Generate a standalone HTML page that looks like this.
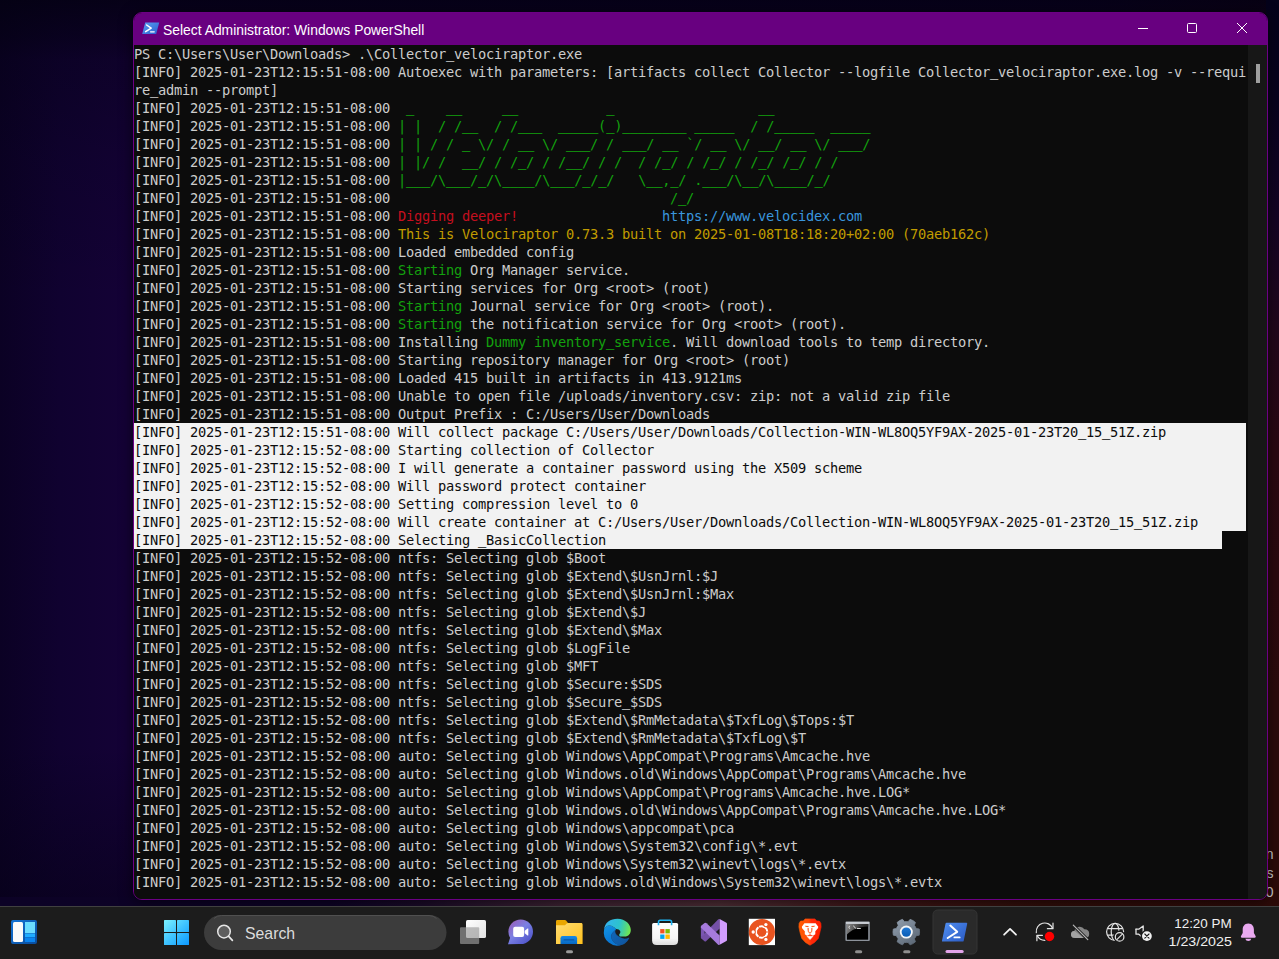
<!DOCTYPE html>
<html lang="en">
<head>
<meta charset="utf-8">
<title>Select Administrator: Windows PowerShell</title>
<style>
html,body{margin:0;padding:0;}
body{width:1279px;height:959px;overflow:hidden;position:relative;background:#0c0230;font-family:"Liberation Sans",sans-serif;}
#wall{position:absolute;left:0;top:0;width:1279px;height:906px;
 background:
  linear-gradient(to bottom, rgba(3,1,16,.8) 0px, rgba(3,1,16,.55) 36px, rgba(3,1,16,.3) 60px, rgba(3,1,16,.12) 160px, rgba(3,1,16,0) 300px),
  linear-gradient(to top, rgba(6,1,22,.55) 0px, rgba(6,1,22,0) 160px),
  linear-gradient(to right, #0b0124 0px, #100230 60px, #140236 125px, #140236 1100px, #1a0420 1279px);
}
#wallr{position:absolute;left:1266px;top:0;width:13px;height:906px;
 background:linear-gradient(to bottom,#04021a 0px,#08021e 100px,#140424 220px,#22071c 330px,#2a0812 450px,#2c0a0c 700px,#2c0a08 906px);}
#wallb{position:absolute;left:0;top:897px;width:1279px;height:9px;
 background:linear-gradient(to right,#0c0226 0px,#0d0226 330px,#1a0a28 420px,#3c2232 560px,#4c2c34 720px,#3e1618 860px,#300d09 1040px,#2c0a08 1279px);}
#wm{position:absolute;right:5.5px;top:844.6px;font-size:14px;line-height:19px;color:#cfcfcf;text-align:right;}
#win{position:absolute;left:133px;top:12px;width:1133px;height:886px;border:1px solid #6c0084;box-shadow:0 2px 14px rgba(0,0,0,.55);border-radius:9px;overflow:hidden;background:#0c0c0c;}
#tb{position:absolute;left:0;top:0;width:1133px;height:32px;background:#680080;}
#ttl{position:absolute;left:29.4px;top:1px;line-height:32px;font-size:15px;color:#fff;white-space:nowrap;transform-origin:0 50%;transform:scaleX(.9245);}
#term{position:absolute;left:0;top:32px;width:1114px;height:854px;background:#0c0c0c;overflow:hidden;}
#sb{position:absolute;left:1114px;top:32px;width:19px;height:854px;background:#171717;}
#th{position:absolute;left:8px;top:19px;width:4px;height:19px;background:#9f9f9f;}
.l{height:18px;line-height:18px;white-space:pre;color:#cccccc;font-family:"DejaVu Sans Mono","Liberation Mono",monospace;font-size:13.7px;letter-spacing:-0.2405px;width:1112px;}
.s{color:#0c0c0c;}
.sel{position:absolute;left:0;background:#f2f2f2;}
.u{position:relative;top:-1.5px;text-shadow:0 0 0 currentColor}
.g{color:#13a10e}.r{color:#c50f1f}.y{color:#c19c00}.b{color:#3a96dd}
#bar{position:absolute;left:0;top:906px;width:1279px;height:53px;background:#1c1c1c;}
#srch{left:244.5px;top:16px;line-height:24px;font-size:17px;color:#dcdcdc;transform-origin:0 50%;transform:scaleX(.93);white-space:nowrap;}
#clk1,#clk2{right:47.5px;font-size:13px;line-height:16px;color:#f0f0f0;white-space:nowrap;transform-origin:100% 50%;}
#clk1{top:10px;transform:scaleX(1.032);}
#clk2{top:28px;transform:scaleX(1.095);}
.ab{position:absolute;}
</style>
</head>
<body>
<div id="wall"></div>
<div id="wallr"></div>
<div id="wallb"></div>
<div id="wm"><div>n</div><div>s</div><div>0</div></div>
<div id="win">
 <div id="tb">
  <svg class="ab" style="left:8px;top:9px" width="18" height="13" viewBox="0 0 18 14" preserveAspectRatio="none">
   <defs><linearGradient id="psg" x1="0" y1="0" x2="1" y2="1"><stop offset="0" stop-color="#5aa0f0"/><stop offset="1" stop-color="#2a5fd0"/></linearGradient></defs>
   <path d="M3.2 0.5H17.2L14.2 13H0.2Z" fill="url(#psg)"/>
   <path d="M4.6 3.2L9.2 6.6L3.6 10.4" fill="none" stroke="#fff" stroke-width="1.5" stroke-linecap="round" stroke-linejoin="round"/>
   <path d="M8.6 10.6H12.2" fill="none" stroke="#fff" stroke-width="1.4" stroke-linecap="round"/>
  </svg>
  <div id="ttl">Select Administrator: Windows PowerShell</div>
  <svg class="ab" style="left:1000px;top:6px" width="120" height="20" viewBox="0 0 120 20" fill="none" stroke="#fff" stroke-width="1">
   <path d="M4 9.5H14"/>
   <rect x="53.5" y="4.5" width="9" height="9" rx="1"/>
   <path d="M103 4L113 14M113 4L103 14"/>
  </svg>
 </div>
 <div id="term">
<div class="sel" style="top:378px;width:1112px;height:108px"></div><div class="sel" style="top:486px;width:1088px;height:18px"></div>
<div style="position:relative">
<div class="l">PS C:\Users\User\Downloads&gt; .\Collector<span class="u">_</span>velociraptor.exe</div>
<div class="l">[INFO] 2025-01-23T12:15:51-08:00 Autoexec with parameters: [artifacts collect Collector --logfile Collector<span class="u">_</span>velociraptor.exe.log -v --requi</div>
<div class="l">re<span class="u">_</span>admin --prompt]</div>
<div class="l">[INFO] 2025-01-23T12:15:51-08:00 <span class="g"> <span class="u">_</span>    <span class="u">__</span>     <span class="u">__</span>           <span class="u">_</span>                  <span class="u">__</span></span></div>
<div class="l">[INFO] 2025-01-23T12:15:51-08:00 <span class="g">| |  / /<span class="u">__</span>  / /<span class="u">___</span>  <span class="u">_____</span>(<span class="u">_</span>)<span class="u">________</span> <span class="u">_____</span>  / /<span class="u">_____</span>  <span class="u">_____</span></span></div>
<div class="l">[INFO] 2025-01-23T12:15:51-08:00 <span class="g">| | / / <span class="u">_</span> \/ / <span class="u">__</span> \/ <span class="u">___</span>/ / <span class="u">___</span>/ <span class="u">__</span> `/ <span class="u">__</span> \/ <span class="u">__</span>/ <span class="u">__</span> \/ <span class="u">___</span>/</span></div>
<div class="l">[INFO] 2025-01-23T12:15:51-08:00 <span class="g">| |/ /  <span class="u">__</span>/ / /<span class="u">_</span>/ / /<span class="u">__</span>/ / /  / /<span class="u">_</span>/ / /<span class="u">_</span>/ / /<span class="u">_</span>/ /<span class="u">_</span>/ / /</span></div>
<div class="l">[INFO] 2025-01-23T12:15:51-08:00 <span class="g">|<span class="u">___</span>/\<span class="u">___</span>/<span class="u">_</span>/\<span class="u">____</span>/\<span class="u">___</span>/<span class="u">_</span>/<span class="u">_</span>/   \<span class="u">__</span>,<span class="u">_</span>/ .<span class="u">___</span>/\<span class="u">__</span>/\<span class="u">____</span>/<span class="u">_</span>/</span></div>
<div class="l">[INFO] 2025-01-23T12:15:51-08:00 <span class="g">                                  /<span class="u">_</span>/</span></div>
<div class="l">[INFO] 2025-01-23T12:15:51-08:00 <span class="r">Digging deeper!</span>                  <span class="b">https://www.velocidex.com</span></div>
<div class="l">[INFO] 2025-01-23T12:15:51-08:00 <span class="y">This is Velociraptor 0.73.3 built on 2025-01-08T18:18:20+02:00 (70aeb162c)</span></div>
<div class="l">[INFO] 2025-01-23T12:15:51-08:00 Loaded embedded config</div>
<div class="l">[INFO] 2025-01-23T12:15:51-08:00 <span class="g">Starting</span> Org Manager service.</div>
<div class="l">[INFO] 2025-01-23T12:15:51-08:00 Starting services for Org &lt;root&gt; (root)</div>
<div class="l">[INFO] 2025-01-23T12:15:51-08:00 <span class="g">Starting</span> Journal service for Org &lt;root&gt; (root).</div>
<div class="l">[INFO] 2025-01-23T12:15:51-08:00 <span class="g">Starting</span> the notification service for Org &lt;root&gt; (root).</div>
<div class="l">[INFO] 2025-01-23T12:15:51-08:00 Installing <span class="g">Dummy inventory<span class="u">_</span>service</span>. Will download tools to temp directory.</div>
<div class="l">[INFO] 2025-01-23T12:15:51-08:00 Starting repository manager for Org &lt;root&gt; (root)</div>
<div class="l">[INFO] 2025-01-23T12:15:51-08:00 Loaded 415 built in artifacts in 413.9121ms</div>
<div class="l">[INFO] 2025-01-23T12:15:51-08:00 Unable to open file /uploads/inventory.csv: zip: not a valid zip file</div>
<div class="l">[INFO] 2025-01-23T12:15:51-08:00 Output Prefix : C:/Users/User/Downloads</div>
<div class="l s">[INFO] 2025-01-23T12:15:51-08:00 Will collect package C:/Users/User/Downloads/Collection-WIN-WL8OQ5YF9AX-2025-01-23T20<span class="u">_</span>15<span class="u">_</span>51Z.zip</div>
<div class="l s">[INFO] 2025-01-23T12:15:52-08:00 Starting collection of Collector</div>
<div class="l s">[INFO] 2025-01-23T12:15:52-08:00 I will generate a container password using the X509 scheme</div>
<div class="l s">[INFO] 2025-01-23T12:15:52-08:00 Will password protect container</div>
<div class="l s">[INFO] 2025-01-23T12:15:52-08:00 Setting compression level to 0</div>
<div class="l s">[INFO] 2025-01-23T12:15:52-08:00 Will create container at C:/Users/User/Downloads/Collection-WIN-WL8OQ5YF9AX-2025-01-23T20<span class="u">_</span>15<span class="u">_</span>51Z.zip</div>
<div class="l s">[INFO] 2025-01-23T12:15:52-08:00 Selecting <span class="u">_</span>BasicCollection</div>
<div class="l">[INFO] 2025-01-23T12:15:52-08:00 ntfs: Selecting glob $Boot</div>
<div class="l">[INFO] 2025-01-23T12:15:52-08:00 ntfs: Selecting glob $Extend\$UsnJrnl:$J</div>
<div class="l">[INFO] 2025-01-23T12:15:52-08:00 ntfs: Selecting glob $Extend\$UsnJrnl:$Max</div>
<div class="l">[INFO] 2025-01-23T12:15:52-08:00 ntfs: Selecting glob $Extend\$J</div>
<div class="l">[INFO] 2025-01-23T12:15:52-08:00 ntfs: Selecting glob $Extend\$Max</div>
<div class="l">[INFO] 2025-01-23T12:15:52-08:00 ntfs: Selecting glob $LogFile</div>
<div class="l">[INFO] 2025-01-23T12:15:52-08:00 ntfs: Selecting glob $MFT</div>
<div class="l">[INFO] 2025-01-23T12:15:52-08:00 ntfs: Selecting glob $Secure:$SDS</div>
<div class="l">[INFO] 2025-01-23T12:15:52-08:00 ntfs: Selecting glob $Secure<span class="u">_</span>$SDS</div>
<div class="l">[INFO] 2025-01-23T12:15:52-08:00 ntfs: Selecting glob $Extend\$RmMetadata\$TxfLog\$Tops:$T</div>
<div class="l">[INFO] 2025-01-23T12:15:52-08:00 ntfs: Selecting glob $Extend\$RmMetadata\$TxfLog\$T</div>
<div class="l">[INFO] 2025-01-23T12:15:52-08:00 auto: Selecting glob Windows\AppCompat\Programs\Amcache.hve</div>
<div class="l">[INFO] 2025-01-23T12:15:52-08:00 auto: Selecting glob Windows.old\Windows\AppCompat\Programs\Amcache.hve</div>
<div class="l">[INFO] 2025-01-23T12:15:52-08:00 auto: Selecting glob Windows\AppCompat\Programs\Amcache.hve.LOG*</div>
<div class="l">[INFO] 2025-01-23T12:15:52-08:00 auto: Selecting glob Windows.old\Windows\AppCompat\Programs\Amcache.hve.LOG*</div>
<div class="l">[INFO] 2025-01-23T12:15:52-08:00 auto: Selecting glob Windows\appcompat\pca</div>
<div class="l">[INFO] 2025-01-23T12:15:52-08:00 auto: Selecting glob Windows\System32\config\*.evt</div>
<div class="l">[INFO] 2025-01-23T12:15:52-08:00 auto: Selecting glob Windows\System32\winevt\logs\*.evtx</div>
<div class="l">[INFO] 2025-01-23T12:15:52-08:00 auto: Selecting glob Windows.old\Windows\System32\winevt\logs\*.evtx</div>
</div>
 </div>
 <div id="sb"><div id="th"></div></div>
</div>
<div id="bar">
<svg class="ab" style="left:0;top:0" width="1279" height="53" viewBox="0 906 1279 53">
 <defs>
  <linearGradient id="wg" x1="0" y1="0" x2="1" y2="1"><stop offset="0" stop-color="#1273d6"/><stop offset="1" stop-color="#0a4c9c"/></linearGradient>
  <linearGradient id="stg" gradientUnits="userSpaceOnUse" x1="164" y1="920" x2="189" y2="945"><stop offset="0" stop-color="#7cf2ff"/><stop offset=".5" stop-color="#3fc3ff"/><stop offset="1" stop-color="#0c98ff"/></linearGradient>
  <linearGradient id="tvw" x1="0" y1="0" x2="1" y2="1"><stop offset="0" stop-color="#ffffff"/><stop offset="1" stop-color="#e2e2e2"/></linearGradient>
  <linearGradient id="tcg" gradientUnits="userSpaceOnUse" x1="510" y1="921" x2="530" y2="944"><stop offset="0" stop-color="#9a5fb8"/><stop offset=".45" stop-color="#7a80e4"/><stop offset="1" stop-color="#4a4fc6"/></linearGradient>
  <linearGradient id="fg" x1="0" y1="0" x2="1" y2="1"><stop offset="0" stop-color="#ffdc72"/><stop offset="1" stop-color="#ffc21f"/></linearGradient>
  <linearGradient id="fb" x1="0" y1="0" x2="0" y2="1"><stop offset="0" stop-color="#1489e6"/><stop offset="1" stop-color="#0768c2"/></linearGradient>
  <linearGradient id="eg1" gradientUnits="userSpaceOnUse" x1="605" y1="924" x2="630" y2="930"><stop offset="0" stop-color="#33b4f0"/><stop offset=".55" stop-color="#2dc3cc"/><stop offset=".8" stop-color="#4fd48a"/><stop offset="1" stop-color="#70e650"/></linearGradient>
  <linearGradient id="eg2" gradientUnits="userSpaceOnUse" x1="606" y1="925" x2="618" y2="946"><stop offset="0" stop-color="#1394e4"/><stop offset=".6" stop-color="#0a7ad6"/><stop offset="1" stop-color="#0b72cc"/></linearGradient>
  <linearGradient id="eg3" gradientUnits="userSpaceOnUse" x1="612" y1="931" x2="626" y2="945"><stop offset="0" stop-color="#1166b8"/><stop offset="1" stop-color="#0f559e"/></linearGradient>
  <linearGradient id="sg" x1="0" y1="0" x2="0" y2="1"><stop offset="0" stop-color="#ffffff"/><stop offset=".7" stop-color="#f6f6f6"/><stop offset="1" stop-color="#dcdcdc"/></linearGradient>
  <linearGradient id="bvg" gradientUnits="userSpaceOnUse" x1="799" y1="932" x2="821" y2="932"><stop offset="0" stop-color="#ff5a00"/><stop offset=".45" stop-color="#ff4a08"/><stop offset=".55" stop-color="#ff2a0a"/><stop offset="1" stop-color="#ff1e00"/></linearGradient>
  <linearGradient id="cmg" gradientUnits="userSpaceOnUse" x1="847" y1="924" x2="868" y2="934"><stop offset="0" stop-color="#8c8c8c"/><stop offset=".55" stop-color="#3a3a3a"/><stop offset="1" stop-color="#1e1e1e"/></linearGradient>
  <linearGradient id="grg" gradientUnits="userSpaceOnUse" x1="896" y1="920" x2="916" y2="945"><stop offset="0" stop-color="#8f9cab"/><stop offset="1" stop-color="#5a6674"/></linearGradient>
  <linearGradient id="gbg" x1="0" y1="0" x2="0" y2="1"><stop offset="0" stop-color="#1f78d6"/><stop offset="1" stop-color="#0a5cb4"/></linearGradient>
  <linearGradient id="psg2" gradientUnits="userSpaceOnUse" x1="945" y1="922" x2="964" y2="942"><stop offset="0" stop-color="#4f8ef2"/><stop offset="1" stop-color="#2c5cc4"/></linearGradient>
 </defs>
 <!-- taskbar base -->
 <rect x="0" y="906" width="1279" height="53" fill="#1c1c1c"/>
 <rect x="0" y="906" width="1279" height="1" fill="#404040"/>
 <!-- widgets -->
 <rect x="11" y="920" width="26" height="24" rx="2" fill="url(#wg)"/>
 <rect x="13" y="922" width="10" height="20" rx="1.5" fill="#fafafa"/>
 <rect x="25" y="922" width="10" height="11.2" fill="#6bdcff"/>
 <rect x="25" y="933.6" width="10" height="3.6" fill="#1fabff"/>
 <rect x="25" y="937.6" width="10" height="4.4" fill="#0a84ee"/>
 <!-- start -->
 <g fill="url(#stg)">
  <rect x="164" y="920" width="12" height="12" rx=".6"/><rect x="177" y="920" width="12" height="12" rx=".6"/>
  <rect x="164" y="933" width="12" height="12" rx=".6"/><rect x="177" y="933" width="12" height="12" rx=".6"/>
 </g>
 <!-- search pill -->
 <rect x="204" y="915" width="242.5" height="35" rx="17.5" fill="#3c3c3c"/>
 <path d="M214 918.5 Q217 915.5 221.500 915.5 H429 Q433.500 915.5 436.500 918.500" fill="none" stroke="#505050" stroke-width="1"/>
 <circle cx="224" cy="931.6" r="6.3" fill="#5e5e5e" stroke="#e6e6e6" stroke-width="1.5"/>
 <path d="M228.700 936.300 L232.400 940.300" stroke="#e6e6e6" stroke-width="1.7" stroke-linecap="round"/>
 <!-- task view -->
 <rect x="466" y="920" width="20" height="18" rx="1.6" fill="url(#tvw)"/>
 <rect x="460" y="927.200" width="19.200" height="16.700" rx="1" fill="#9c9c9c" fill-opacity=".66"/>
 <!-- teams chat -->
 <circle cx="520.700" cy="931.800" r="12.300" fill="url(#tcg)"/>
 <path d="M508 944.300 L510.600 936.300 L519 943.900 Z" fill="url(#tcg)"/>
 <rect x="513.200" y="926.800" width="10.900" height="10.100" rx="1.900" fill="#ffffff"/>
 <path d="M524.700 930.700 L527.600 928.400 Q528.300 928 528.300 928.900 V935 Q528.300 935.900 527.600 935.500 L524.700 933.200 Z" fill="#ffffff"/>
 <!-- file explorer -->
 <path d="M556 921.400 Q556 920 557.400 920 H564.800 Q565.600 920 566.100 920.600 L568 923 H581 Q582.400 923 582.400 924.400 V944.100 H556 Z" fill="#e9a600"/>
 <path d="M556 925.200 H564.300 Q565 925.200 565.500 924.700 L566.700 923.500 Q567.200 923 567.900 923 H581 Q582.400 923 582.400 924.400 V944.100 H556 Z" fill="url(#fg)"/>
 <path d="M560.500 944.100 V938.300 Q560.500 936.100 562.700 936.100 H574.900 Q577.100 936.100 577.100 938.300 V944.100 Z" fill="url(#fb)"/>
 <rect x="563.500" y="939.300" width="10.800" height="1.300" rx=".65" fill="#0a57a8"/>
 <rect x="566" y="950.200" width="7" height="3" rx="1.500" fill="#9a9a9a"/>
 <!-- edge -->
 <path d="M604.1 929.5 C605.4 926.3 607.3 925.3 609.3 925.4 C612 925.6 614.5 927 616.3 929 L615 930.5 C612.3 932.6 610.9 935.2 611.3 937 C611.8 940 613.5 942.5 615.8 943.7 C618 944.6 620.5 944.9 622.5 944.4 A13.3 13.3 0 0 1 604.1 929.5 Z" fill="url(#eg2)"/>
 <path d="M615.2 930.3 C612.3 932.6 610.9 935.2 611.3 937 C611.8 940 613.5 942.5 615.8 943.7 C618 944.6 620.5 944.9 622.5 944.4 C625.3 943.6 627.6 941 628.9 938 C627.5 938.8 626 939 624.4 938.9 C622.8 938.7 621.5 938.3 620.3 937.6 C618.6 936.7 617.4 935.8 616.5 935 C615.3 933.8 614.6 932.2 615.2 930.3 Z" fill="url(#eg3)" stroke="#1163b4" stroke-width=".5"/>
 <path d="M604.1 929.6 C604.5 922.5 610.5 918.7 617.5 918.7 C625.5 918.7 630.8 924.5 630.8 930 C630.8 933.5 628.6 936.6 624.5 936.6 L621 936.6 C619.6 936.4 618.9 935.4 619.2 934.4 C620.2 933 620.6 932.2 620.3 931.4 C619.6 929.8 618 929 616.3 929 C614.5 927 612 925.6 609.3 925.4 C607.3 925.3 605.4 926.3 604.1 929.6 Z" fill="url(#eg1)"/>
 <!-- store -->
 <path d="M652.100 924.400 Q652.100 922.900 653.600 922.900 H676.600 Q678.100 922.900 678.100 924.400 V940.400 Q678.100 944.900 673.600 944.900 H656.600 Q652.100 944.900 652.100 940.400 Z" fill="url(#sg)"/>
 <path d="M658.500 925.200 V922 Q658.500 920.300 660.200 920.300 H669.900 Q671.600 920.300 671.600 922 V925.200" fill="none" stroke="#1fb3f2" stroke-width="1.600"/>
 <rect x="660.200" y="929.100" width="4.300" height="4.300" fill="#f25022"/>
 <rect x="665.400" y="929.100" width="4.400" height="4.300" fill="#7fba00"/>
 <rect x="660.200" y="934.500" width="4.300" height="4.400" fill="#00a4ef"/>
 <rect x="665.400" y="934.500" width="4.400" height="4.400" fill="#ffb900"/>
 <!-- visual studio -->
 <path d="M719.650 919.050 L719.650 928.600 L706 941.300 Q705.300 941.700 704.500 941.200 L701.300 938.600 Q700.800 938 700.900 937.300 L718.300 919.300 Z" fill="#7450a6"/>
 <path d="M700.900 926.800 L704.600 929.800 V934.600 L700.900 937.600 Z" fill="#7a56b2"/>
 <path d="M700.900 926.600 Q700.900 926 701.400 925.500 L704.600 923.100 Q705.600 922.500 706.500 923.200 L719.650 935.600 V944.800 L718.400 945.100 L700.900 927.600 Z" fill="#a67bdc"/>
 <path d="M719.650 919.050 L726.400 922.700 Q727 923.100 727 923.800 V940 Q727 940.700 726.400 941.100 L719.650 944.800 Z" fill="#d29dff"/>
 <!-- ubuntu -->
 <rect x="748.800" y="918.800" width="26.200" height="26.300" fill="#ffffff"/>
 <circle cx="761.900" cy="932" r="13.100" fill="#e95420"/>
 <circle cx="761.700" cy="932" r="5.600" fill="none" stroke="#ffffff" stroke-width="2.100"/>
 <g fill="#e95420"><circle cx="765.900" cy="924.500" r="2.700"/><circle cx="753.100" cy="932" r="2.700"/><circle cx="765.900" cy="939.500" r="2.700"/></g>
 <g stroke="#e95420" stroke-width=".9"><path d="M761.700 932 L757.200 924.200"/><path d="M761.700 932 L770.700 932"/><path d="M761.700 932 L757.200 939.800"/></g>
 <circle cx="761.700" cy="932" r="4.500" fill="#e95420"/>
 <g fill="#ffffff"><circle cx="765.900" cy="924.600" r="1.650"/><circle cx="753.200" cy="932" r="1.650"/><circle cx="765.900" cy="939.400" r="1.650"/></g>
 <!-- brave -->
 <path d="M805.100 918.900 H814.900 L816.800 920.900 L819.400 921 L820.900 923.400 L821.100 927.100 L819.800 932.800 L818.300 938.400 L814.500 942.500 L810 945.200 L805.500 942.500 L801.800 938.400 L800.100 932.800 L798.900 927.100 L799.100 923.400 L800.600 921 L803.300 920.900 Z" fill="url(#bvg)" stroke="url(#bvg)" stroke-width=".6" stroke-linejoin="round"/>
 <path d="M804.400 923.300 H815.600 L818.300 926.800 L817.900 928.300 L815.300 931.300 V934.300 L813 935.800 L810 934.300 L807 935.800 L804.800 934.300 V931.300 L802.100 928.300 L801.800 926.800 Z" fill="#ffffff"/>
 <path d="M807 936.300 H813 L810 939.600 Z" fill="#ffffff" stroke="#ffffff" stroke-width=".6" stroke-linejoin="round"/>
 <g fill="#ff5a1e"><path d="M804.900 925.700 L808.700 926.100 L808.300 927.200 L805.600 926.700 Z"/><path d="M815.100 925.700 L811.300 926.100 L811.700 927.200 L814.400 926.700 Z"/>
 <path d="M807.300 928.300 L808.900 928 L808.900 931.600 L810 932.200 L811.100 931.600 L811.100 928 L812.700 928.300 L812.200 931.800 L810 934 L807.800 931.800 Z" fill-opacity=".8"/></g>
 <!-- cmd -->
 <rect x="845.400" y="921.400" width="24.400" height="19.700" rx="1" fill="#8d939b"/>
 <rect x="846" y="921.900" width="23.200" height="2" fill="#c9ced4"/>
 <rect x="846.900" y="924" width="21.300" height="15.700" fill="#000000"/>
 <path d="M846.900 924 H868.200 V926.500 C858 927 851 930 846.900 934.500 Z" fill="url(#cmg)"/>
 <path d="M849.600 925.800 Q848.200 927.300 849.700 928.700" fill="none" stroke="#f0f0f0" stroke-width=".9"/>
 <path d="M853.300 925.900 L855.800 928.300" stroke="#f0f0f0" stroke-width="1"/>
 <path d="M856.800 928.500 H860.800" stroke="#f0f0f0" stroke-width=".9"/>
 <rect x="855" y="950.200" width="7.200" height="3" rx="1.500" fill="#8e8e8e"/>
 <!-- settings -->
 <path d="M916.17 928.51 L919.23 929.00 A13.3 13.3 0 0 1 919.23 935.20 L916.17 935.69 A10.5 10.5 0 0 1 914.34 938.85 L915.46 941.75 A13.3 13.3 0 0 1 910.08 944.85 L908.12 942.44 A10.5 10.5 0 0 1 904.48 942.44 L902.52 944.85 A13.3 13.3 0 0 1 897.14 941.75 L898.26 938.85 A10.5 10.5 0 0 1 896.43 935.69 L893.37 935.20 A13.3 13.3 0 0 1 893.37 929.00 L896.43 928.51 A10.5 10.5 0 0 1 898.26 925.35 L897.14 922.45 A13.3 13.3 0 0 1 902.52 919.35 L904.48 921.76 A10.5 10.5 0 0 1 908.12 921.76 L910.08 919.35 A13.3 13.3 0 0 1 915.46 922.45 L914.34 925.35 A10.5 10.5 0 0 1 916.17 928.51 Z" fill="url(#grg)" stroke="url(#grg)" stroke-width=".8" stroke-linejoin="round"/>
 <circle cx="906.300" cy="932.100" r="6.500" fill="#f4f6f8"/>
 <circle cx="906.300" cy="932.100" r="4.700" fill="url(#gbg)"/>
 <rect x="903.200" y="950.200" width="7.200" height="3" rx="1.500" fill="#8e8e8e"/>
 <!-- powershell active -->
 <rect x="933" y="910" width="44" height="44" rx="4.500" fill="#2a2a2a" stroke="#343434" stroke-width="1"/>
 <path d="M946.600 922.800 H966.500 Q967.400 922.800 967.200 923.700 L963.700 940.700 Q963.500 941.600 962.600 941.600 H942.700 Q941.800 941.600 942 940.700 L945.500 923.700 Q945.700 922.800 946.600 922.800 Z" fill="url(#psg2)"/>
 <path d="M950.300 925.600 L957.200 931.800 L947.700 938" fill="none" stroke="#ffffff" stroke-width="2" stroke-linecap="round" stroke-linejoin="round"/>
 <path d="M954.400 937.400 H959.600" stroke="#ffffff" stroke-width="1.900" stroke-linecap="round"/>
 <rect x="945.500" y="950" width="18.200" height="3" rx="1.500" fill="#e3a4ea"/>
 <!-- tray chevron -->
 <path d="M1004.100 934.700 L1010.050 928.900 L1016 934.700" fill="none" stroke="#f2f2f2" stroke-width="1.800" stroke-linecap="round" stroke-linejoin="round"/>
 <!-- sync -->
 <g fill="none" stroke="#e4e4e4" stroke-width="1.200" stroke-linecap="round" stroke-linejoin="round">
  <path d="M1036.300 932.600 A8.500 8.500 0 0 1 1052.600 928.300"/>
  <path d="M1053 923 V928.700 H1047.400"/>
  <path d="M1036.900 940.700 V935.400 H1042.400"/>
  <path d="M1037.300 935.800 A8.500 8.500 0 0 0 1044.800 940.400"/>
 </g>
 <circle cx="1049.500" cy="936.500" r="4.700" fill="#ff0000"/>
 <!-- cloud off -->
 <path d="M1075.500 938.100 Q1071 938.100 1071 934.600 Q1071 931.400 1074.300 931 Q1075.300 927.200 1079.200 926.700 Q1082.600 926.400 1084.400 929.200 Q1089.200 929.300 1089.200 933.800 Q1089.200 938.100 1085 938.100 Z" fill="#858585"/>
 <path d="M1071 934.600 Q1071 931.400 1074.300 931 L1083.500 938.100 H1075.500 Q1071 938.100 1071 934.600 Z" fill="#a2a2a2"/>
 <path d="M1073.300 925.200 L1087.800 939.700" stroke="#1c1c1c" stroke-width="3" stroke-linecap="round"/>
 <path d="M1073.300 925.200 L1087.800 939.700" stroke="#b8b8b8" stroke-width="1.200" stroke-linecap="round"/>
 <!-- globe blocked -->
 <g fill="none" stroke="#e4e4e4" stroke-width="1.200">
  <circle cx="1115.100" cy="931.850" r="8.500"/>
  <ellipse cx="1115.100" cy="931.850" rx="3.900" ry="8.500"/>
  <path d="M1107.300 928.600 H1122.900 M1107.300 935.100 H1122.900"/>
 </g>
 <circle cx="1119.600" cy="936.900" r="6.300" fill="#1c1c1c"/>
 <circle cx="1119.600" cy="936.900" r="4.300" fill="none" stroke="#e4e4e4" stroke-width="1.200"/>
 <path d="M1116.600 939.900 L1122.600 933.900" stroke="#e4e4e4" stroke-width="1.200"/>
 <!-- volume muted -->
 <path d="M1136 929.200 H1138.700 L1143.200 925.900 V934" fill="none" stroke="#e4e4e4" stroke-width="1.300" stroke-linejoin="round" stroke-linecap="round"/>
 <path d="M1136 929.200 V934.200 H1138.700 L1141 936" fill="none" stroke="#e4e4e4" stroke-width="1.300" stroke-linejoin="round" stroke-linecap="round"/>
 <circle cx="1146.900" cy="936.100" r="6.300" fill="#1c1c1c"/>
 <circle cx="1146.900" cy="936.100" r="4.900" fill="#f2f2f2"/>
 <path d="M1144.800 934 L1149 938.200 M1149 934 L1144.800 938.200" stroke="#1c1c1c" stroke-width="1.100" stroke-linecap="round"/>
 <!-- bell -->
 <path d="M1248.300 923.500 C1244.500 923.500 1242.700 926.500 1242.700 929.500 V933 L1240.900 936.300 Q1240.500 937.700 1241.900 937.700 H1254.700 Q1256.100 937.700 1255.700 936.300 L1253.900 933 V929.500 C1253.900 926.500 1252.100 923.500 1248.300 923.500 Z" fill="#e9a9f0"/>
 <path d="M1245.300 938.700 H1251.300 Q1250.700 941 1248.300 941 Q1245.900 941 1245.300 938.700 Z" fill="#e9a9f0"/>
</svg>
<div class="ab" id="srch">Search</div>
<div class="ab" id="clk1">12:20 PM</div>
<div class="ab" id="clk2">1/23/2025</div>

</div>
</body>
</html>
